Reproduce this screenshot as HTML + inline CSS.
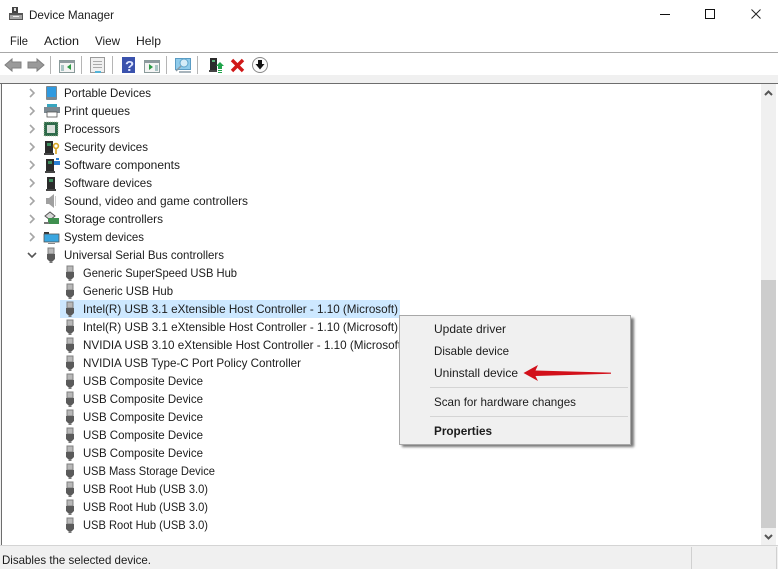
<!DOCTYPE html>
<html><head><meta charset="utf-8"><title>Device Manager</title>
<style>
html,body{margin:0;padding:0;background:#fff;width:778px;height:569px;overflow:hidden}
svg{display:block}
text{font-family:"Liberation Sans",sans-serif;font-size:12px;fill:#1c1c1c}
</style></head><body>
<svg width="778" height="569" viewBox="0 0 778 569" xmlns="http://www.w3.org/2000/svg">
<defs>
<g id="usb">
<rect x="-3" y="-7" width="6" height="6" fill="#b8b8b8" stroke="#808080" stroke-width="1"/>
<path d="M-4-1H4V4L2 6H-2L-4 4Z" fill="#5a5a5a"/>
<rect x="-1.5" y="6" width="3" height="2" fill="#777"/>
</g>
<path id="chev" d="M-2-4L2 0L-2 4" fill="none" stroke="#a6a6a6" stroke-width="1.6"/>
<g id="tower"><rect x="-4" y="-7" width="8" height="12" fill="#2b2b2b"/><rect x="-2" y="-5" width="4" height="3" fill="#3f8f5f"/><rect x="-5" y="5" width="10" height="2" fill="#444"/></g>
<filter id="sh" x="-5%" y="-5%" width="112%" height="112%"><feGaussianBlur stdDeviation="1.4"/></filter>
</defs>

<!-- title bar -->
<rect width="778" height="569" fill="#fff"/>
<g>
<rect x="12" y="7" width="6" height="6" fill="#444"/><rect x="14" y="8" width="2" height="3" fill="#ddd"/>
<rect x="9" y="13" width="14" height="7" fill="#555"/><rect x="10" y="15" width="12" height="4" fill="#a5a5a5"/><rect x="13" y="16" width="6" height="1" fill="#eee"/>
</g>
<text x="29" y="19" textLength="85" lengthAdjust="spacingAndGlyphs">Device Manager</text>
<rect x="660" y="14" width="10" height="1" fill="#111"/>
<rect x="705.5" y="9.5" width="9" height="9" fill="none" stroke="#111"/>
<path d="M751.5 9.5L760.5 18.5M760.5 9.5L751.5 18.5" stroke="#222" stroke-width="1"/>

<!-- menu -->
<text x="10" y="45" textLength="18" lengthAdjust="spacingAndGlyphs">File</text>
<text x="44" y="45" textLength="35" lengthAdjust="spacingAndGlyphs">Action</text>
<text x="95" y="45" textLength="25" lengthAdjust="spacingAndGlyphs">View</text>
<text x="136" y="45" textLength="25" lengthAdjust="spacingAndGlyphs">Help</text>
<rect y="52" width="778" height="1" fill="#a8a8a8"/>

<!-- toolbar -->
<path d="M5 65L12 59V62H21V68H12V71Z" fill="#9a9a9a" stroke="#808080"/>
<path d="M44 65L37 59V62H28V68H37V71Z" fill="#9a9a9a" stroke="#808080"/>
<rect x="50" y="56" width="1" height="18" fill="#b5b5b5"/>
<g>
<rect x="59.5" y="60.5" width="15" height="12" fill="#f4f4f4" stroke="#8a9a9a"/><rect x="60" y="61" width="14" height="2" fill="#8f9a9f"/>
<path d="M71 64L67 67L71 70Z" fill="#2c9a45"/><rect x="61" y="65" width="3" height="6" fill="#a9c4c4"/>
</g>
<rect x="81" y="56" width="1" height="18" fill="#b5b5b5"/>
<g>
<rect x="90.5" y="57.5" width="14" height="15" fill="#f0f0f0" stroke="#9a9a9a"/>
<rect x="93" y="61" width="9" height="1" fill="#aaa"/><rect x="93" y="64" width="9" height="1" fill="#aaa"/><rect x="93" y="67" width="9" height="1" fill="#aaa"/>
<rect x="95" y="71" width="6" height="2" fill="#54b4d8"/>
</g>
<rect x="112" y="56" width="1" height="18" fill="#b5b5b5"/>
<rect x="122" y="57" width="13" height="16" fill="#3a52ad"/>
<text x="125" y="71" style="font-size:15px;font-weight:bold;fill:#dfe6ff">?</text>
<g>
<rect x="144.5" y="60.5" width="15" height="12" fill="#f4f4f4" stroke="#8a9a9a"/><rect x="145" y="61" width="14" height="2" fill="#8f9a9f"/>
<path d="M149 64L153 67L149 70Z" fill="#2c9a45"/><rect x="155" y="65" width="3" height="6" fill="#a9c4c4"/>
</g>
<rect x="166" y="56" width="1" height="18" fill="#b5b5b5"/>
<g>
<rect x="175.5" y="58.5" width="15" height="11" fill="#8fcbeb" stroke="#5a9cc4"/>
<circle cx="184" cy="63" r="4" fill="#d5ecf8" stroke="#5fa5cc"/>
<path d="M181 66L176 71" stroke="#8a9aa5" stroke-width="1.5"/>
<path d="M179 72H191" stroke="#8a9aa5" stroke-width="1.5"/>
</g>
<rect x="197" y="56" width="1" height="18" fill="#b5b5b5"/>
<g>
<rect x="210" y="58" width="7" height="12" fill="#2b2b2b"/><rect x="212" y="60" width="3" height="2" fill="#5ab07a"/><rect x="209" y="70" width="8" height="2" fill="#444"/>
<path d="M216 66L220 62L224 66H222V69H218V66Z" fill="#1fa34a"/><rect x="218" y="70" width="4" height="1" fill="#1fa34a"/><rect x="218" y="72" width="4" height="1" fill="#1fa34a"/>
</g>
<path d="M232 60L243 71M243 60L232 71" stroke="#d01818" stroke-width="3.4"/>
<circle cx="260" cy="65" r="7.5" fill="#fbfbfb" stroke="#8a8a8a"/>
<path d="M258 60H262V64H264.5L260 69.5L255.5 64H258Z" fill="#111"/>

<rect y="75" width="778" height="8" fill="#f0f0f0"/>
<rect y="83" width="778" height="1" fill="#6d6d6d"/>

<!-- tree frame -->
<rect x="1" y="84" width="1" height="462" fill="#6d6d6d"/>
<rect x="0" y="84" width="1" height="462" fill="#f0f0f0"/>

<!-- selection -->
<rect x="60" y="300" width="340" height="18" fill="#cde8ff"/>

<!-- category chevrons -->
<use href="#chev" x="32" y="93"/><use href="#chev" x="32" y="111"/><use href="#chev" x="32" y="129"/>
<use href="#chev" x="32" y="147"/><use href="#chev" x="32" y="165"/><use href="#chev" x="32" y="183"/>
<use href="#chev" x="32" y="201"/><use href="#chev" x="32" y="219"/><use href="#chev" x="32" y="237"/>
<path d="M28 253L32 257L36 253" fill="none" stroke="#555" stroke-width="1.6"/>

<!-- category icons -->
<rect x="46" y="86" width="11" height="14" rx="1" fill="#7d8890"/><rect x="47" y="87" width="9" height="10" fill="#2f9ae0"/>
<path d="M44 107H60V113H44Z" fill="#7d8890"/><rect x="47" y="104" width="10" height="3" fill="#37a6c0"/><rect x="47" y="112" width="10" height="5" fill="#fff" stroke="#555" stroke-width=".8"/>
<rect x="44" y="122" width="14" height="14" fill="#2f6b4a"/><rect x="44" y="122" width="14" height="14" fill="none" stroke="#b9c9a5" stroke-width=".8" stroke-dasharray="1 1"/><rect x="47" y="125" width="8" height="8" fill="#d9dfda"/>
<use href="#tower" x="49" y="148"/><circle cx="56" cy="146" r="2.4" fill="none" stroke="#d9a520" stroke-width="1.6"/><path d="M56 148V154" stroke="#d9a520" stroke-width="1.6"/>
<use href="#tower" x="50" y="166"/><path d="M55 160H59V158H56V160M54 161H60V165H54Z" fill="#2a7fd4"/>
<use href="#tower" x="51" y="184"/>
<path d="M46 198H49L54 194V208L49 204H46Z" fill="#a0a0a0"/><rect x="55" y="196" width="1" height="10" fill="#ccc"/>
<path d="M45 216L50 212L55 216L50 220Z" fill="#d8d8d8" stroke="#555"/><rect x="48" y="218" width="11" height="6" fill="#3f8f4f"/><rect x="44" y="222" width="5" height="2" fill="#777"/>
<rect x="44" y="232" width="5" height="3" fill="#333"/><rect x="44" y="234" width="15" height="8" fill="#3aa6e0" stroke="#555" stroke-width=".8"/><rect x="48" y="243" width="7" height="1" fill="#888"/>
<use href="#usb" x="51" y="255"/>

<!-- device icons -->
<use href="#usb" x="70" y="273"/><use href="#usb" x="70" y="291"/><use href="#usb" x="70" y="309"/>
<use href="#usb" x="70" y="327"/><use href="#usb" x="70" y="345"/><use href="#usb" x="70" y="363"/>
<use href="#usb" x="70" y="381"/><use href="#usb" x="70" y="399"/><use href="#usb" x="70" y="417"/>
<use href="#usb" x="70" y="435"/><use href="#usb" x="70" y="453"/><use href="#usb" x="70" y="471"/>
<use href="#usb" x="70" y="489"/><use href="#usb" x="70" y="507"/><use href="#usb" x="70" y="525"/>

<!-- tree text -->
<text x="64" y="97" textLength="87" lengthAdjust="spacingAndGlyphs">Portable Devices</text>
<text x="64" y="115" textLength="66" lengthAdjust="spacingAndGlyphs">Print queues</text>
<text x="64" y="133" textLength="56" lengthAdjust="spacingAndGlyphs">Processors</text>
<text x="64" y="151" textLength="84" lengthAdjust="spacingAndGlyphs">Security devices</text>
<text x="64" y="169" textLength="116" lengthAdjust="spacingAndGlyphs">Software components</text>
<text x="64" y="187" textLength="88" lengthAdjust="spacingAndGlyphs">Software devices</text>
<text x="64" y="205" textLength="184" lengthAdjust="spacingAndGlyphs">Sound, video and game controllers</text>
<text x="64" y="223" textLength="99" lengthAdjust="spacingAndGlyphs">Storage controllers</text>
<text x="64" y="241" textLength="80" lengthAdjust="spacingAndGlyphs">System devices</text>
<text x="64" y="259" textLength="160" lengthAdjust="spacingAndGlyphs">Universal Serial Bus controllers</text>
<text x="83" y="277" textLength="154" lengthAdjust="spacingAndGlyphs">Generic SuperSpeed USB Hub</text>
<text x="83" y="295" textLength="90" lengthAdjust="spacingAndGlyphs">Generic USB Hub</text>
<text x="83" y="313" textLength="315" lengthAdjust="spacingAndGlyphs">Intel(R) USB 3.1 eXtensible Host Controller - 1.10 (Microsoft)</text>
<text x="83" y="331" textLength="315" lengthAdjust="spacingAndGlyphs">Intel(R) USB 3.1 eXtensible Host Controller - 1.10 (Microsoft)</text>
<text x="83" y="349" textLength="322" lengthAdjust="spacingAndGlyphs">NVIDIA USB 3.10 eXtensible Host Controller - 1.10 (Microsoft)</text>
<text x="83" y="367" textLength="218" lengthAdjust="spacingAndGlyphs">NVIDIA USB Type-C Port Policy Controller</text>
<text x="83" y="385" textLength="120" lengthAdjust="spacingAndGlyphs">USB Composite Device</text>
<text x="83" y="403" textLength="120" lengthAdjust="spacingAndGlyphs">USB Composite Device</text>
<text x="83" y="421" textLength="120" lengthAdjust="spacingAndGlyphs">USB Composite Device</text>
<text x="83" y="439" textLength="120" lengthAdjust="spacingAndGlyphs">USB Composite Device</text>
<text x="83" y="457" textLength="120" lengthAdjust="spacingAndGlyphs">USB Composite Device</text>
<text x="83" y="475" textLength="132" lengthAdjust="spacingAndGlyphs">USB Mass Storage Device</text>
<text x="83" y="493" textLength="125" lengthAdjust="spacingAndGlyphs">USB Root Hub (USB 3.0)</text>
<text x="83" y="511" textLength="125" lengthAdjust="spacingAndGlyphs">USB Root Hub (USB 3.0)</text>
<text x="83" y="529" textLength="125" lengthAdjust="spacingAndGlyphs">USB Root Hub (USB 3.0)</text>

<!-- scrollbar -->
<rect x="761" y="84" width="15" height="462" fill="#f0f0f0"/>
<rect x="761" y="280" width="15" height="248" fill="#cdcdcd"/>
<path d="M765 95L768.5 91.5L772 95" fill="none" stroke="#555" stroke-width="2"/>
<path d="M765 535L768.5 538.5L772 535" fill="none" stroke="#555" stroke-width="2"/>

<!-- status bar -->
<rect y="545" width="778" height="1" fill="#d4d4d4"/>
<rect y="546" width="778" height="23" fill="#f0f0f0"/>
<rect x="691" y="547" width="1" height="22" fill="#d0d0d0"/>
<rect x="776" y="547" width="1" height="22" fill="#d0d0d0"/>
<text x="2" y="564" textLength="149" lengthAdjust="spacingAndGlyphs">Disables the selected device.</text>

<!-- context menu -->
<rect x="402" y="318" width="232" height="129" fill="#777" filter="url(#sh)"/>
<rect x="399.5" y="315.5" width="231" height="129" fill="#f0f0f0" stroke="#a8a8a8"/>
<text x="434" y="333" textLength="72" lengthAdjust="spacingAndGlyphs">Update driver</text>
<text x="434" y="355" textLength="75" lengthAdjust="spacingAndGlyphs">Disable device</text>
<text x="434" y="377" textLength="84" lengthAdjust="spacingAndGlyphs">Uninstall device</text>
<rect x="430" y="387" width="198" height="1" fill="#d4d4d4"/>
<text x="434" y="406" textLength="142" lengthAdjust="spacingAndGlyphs">Scan for hardware changes</text>
<rect x="430" y="416" width="198" height="1" fill="#d4d4d4"/>
<text x="434" y="435" textLength="58" lengthAdjust="spacingAndGlyphs" style="font-weight:bold">Properties</text>

<!-- red arrow -->
<path d="M523.5 373L538 365L535.5 370.5L611 372.6V373.8L535.5 376L538 381Z" fill="#d2101a"/>
</svg>
</body></html>
